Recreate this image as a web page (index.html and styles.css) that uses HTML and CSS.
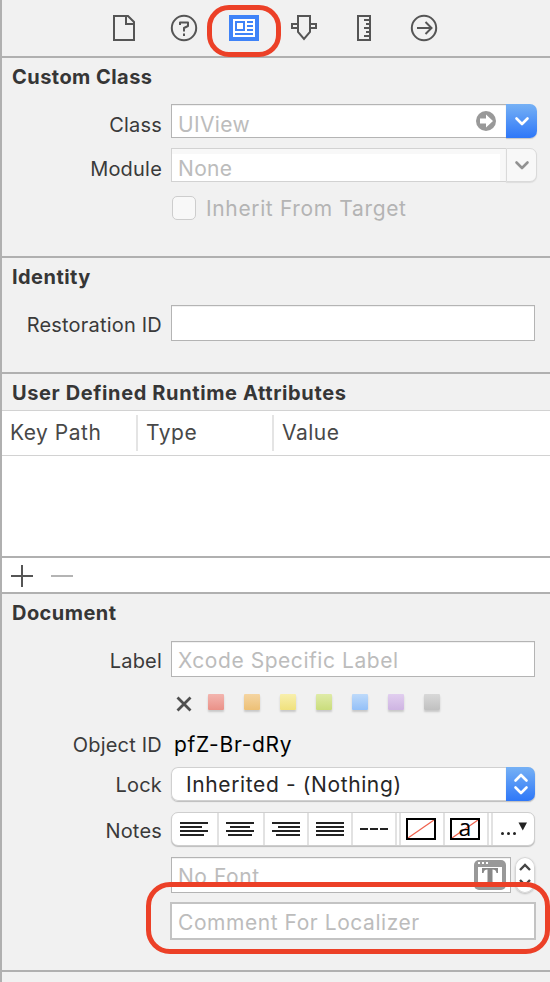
FILE: index.html
```html
<!DOCTYPE html>
<html lang="en">
<head>
<meta charset="utf-8">
<title>Identity Inspector</title>
<link rel="stylesheet" href="styles.css">
</head>
<body>
<main class="inspector">
  <nav class="tabs">
    <svg class="tab" width="30" height="30" viewBox="0 0 30 30"><path d="M5 3h14l6 6v18H5z M17 3v8h8" transform="translate(0 0)"/></svg>
    <svg class="tab" width="30" height="30" viewBox="0 0 30 30"><circle cx="15" cy="15" r="12.200"/><path d="M11 12V9.500h8V13l-4 2v3.500" stroke-linejoin="round"/><path d="M15 20.500v2.500"/></svg>
    <span class="tab-selected">
      <svg class="tab" width="30" height="30" viewBox="0 0 30 30"><path class="blue" d="M0 2h30v26H0z"/><path d="M4 6h22v18H4z" fill="#fff" stroke="none"/><path class="detail" d="M7 9h8v8H7zM18 9h6M18 13h6M18 17h6M6 21h18"/></svg>
      <span class="ring ring-tab"></span>
    </span>
    <svg class="tab" width="30" height="30" viewBox="0 0 30 30"><path d="M9 3h12v16l-6 7-6-7zM9 11H3v4h6M21 11h6v4h-6"/></svg>
    <svg class="tab" width="30" height="30" viewBox="0 0 30 30"><path d="M9 3h12v24H9zM15 7h6M17 11h4M15 15h6M17 19h4M15 23h6"/></svg>
    <svg class="tab" width="30" height="30" viewBox="0 0 30 30"><circle cx="15" cy="15" r="12.200"/><path d="M8 15h14M16.500 9l6 6-6 6"/></svg>
  </nav>

  <section class="section custom-class">
    <h2>Custom Class</h2>
    <div class="row class-row">
      <label>Class</label>
      <div class="combo">
        <div class="field combo-field"><span class="hint short">UIView</span>
          <svg class="go" width="20" height="20" viewBox="0 0 20 20"><circle cx="10" cy="10" r="10" fill="#999"/><path d="M4 7.500h6V3.500l7 6.500-7 6.500v-4H4z" fill="#fff"/></svg>
        </div>
        <div class="arrow arrow-blue"><svg width="16" height="12" viewBox="0 0 16 12"><path d="M2.500 3.500 8 9l5.500-5.500"/></svg></div>
      </div>
    </div>
    <div class="row module-row">
      <label>Module</label>
      <div class="combo">
        <div class="field combo-field disabled"><span class="hint short">None</span></div>
        <div class="arrow arrow-off"><svg width="16" height="12" viewBox="0 0 16 12"><path d="M2.500 3.500 8 9l5.500-5.500"/></svg></div>
      </div>
    </div>
    <div class="inherit"><span class="checkbox"></span><span class="hint">Inherit From Target</span></div>
  </section>

  <section class="section identity">
    <h2>Identity</h2>
    <div class="row restoration-row"><label>Restoration ID</label><div class="field wide"></div></div>
  </section>

  <section class="section attributes">
    <h2 class="loose">User Defined Runtime Attributes</h2>
    <div class="thead"><span>Key Path</span><span>Type</span><span>Value</span></div>
    <div class="tbody"></div>
    <div class="tfoot">
      <svg width="22" height="22" viewBox="0 0 22 22"><path d="M0 11h22M11 0v22" stroke="#555" stroke-width="2"/></svg>
      <svg width="22" height="22" viewBox="0 0 22 22"><path d="M0 11h22" stroke="#b4b4b4" stroke-width="2"/></svg>
    </div>
  </section>

  <section class="section document">
    <h2>Document</h2>
    <div class="row label-row"><label>Label</label><div class="field wide"><span class="hint">Xcode Specific Label</span></div></div>
    <div class="swatches">
      <svg width="16" height="16" viewBox="0 0 16 16"><path d="M1.500 1.500l13 13M14.500 1.500l-13 13" stroke="#505050" stroke-width="2.800"/></svg>
      <i class="red"></i><i class="orange"></i><i class="yellow"></i><i class="green"></i><i class="sky"></i><i class="purple"></i><i class="gray"></i>
    </div>
    <div class="row object-row"><label>Object ID</label><span class="object-id">pfZ-Br-dRy</span></div>
    <div class="row lock-row"><label>Lock</label>
      <div class="popup"><span class="popup-text">Inherited - (Nothing)</span>
        <span class="updown"><svg width="16" height="24" viewBox="0 0 16 24"><path d="M2.500 8.500L8 3l5.500 5.500M2.500 15.500L8 21l5.500-5.500"/></svg></span>
      </div>
    </div>
    <div class="row notes-row"><label>Notes</label>
      <div class="segments">
        <span class="seg s1"><svg width="28" height="16" viewBox="0 0 28 16"><path d="M0 2h28M0 6h22M0 10h28M0 14h24"/></svg></span>
        <span class="seg s2"><svg width="28" height="16" viewBox="0 0 28 16"><path d="M0 2h28M4 6h20M0 10h28M2 14h24"/></svg></span>
        <span class="seg s3"><svg width="28" height="16" viewBox="0 0 28 16"><path d="M0 2h28M6 6h22M0 10h28M4 14h24"/></svg></span>
        <span class="seg s4"><svg width="28" height="16" viewBox="0 0 28 16"><path d="M0 2h28M0 6h28M0 10h28M0 14h28"/></svg></span>
        <span class="seg s5"><svg width="28" height="16" viewBox="0 0 28 16"><path d="M0 8h8M10 8h8M20 8h8"/></svg></span>
        <span class="seg s6"><span class="well"><svg width="26" height="18" viewBox="0 0 26 18"><path class="strike" d="M0 18L26 0"/></svg></span></span>
        <span class="seg s7"><span class="well"><svg width="26" height="18" viewBox="0 0 26 18"><path class="strike" d="M0 18L26 0"/></svg><b>a</b></span></span>
        <span class="seg s8"><svg width="28" height="16" viewBox="0 0 28 16"><g fill="#222"><circle cx="2.500" cy="12.500" r="1.500"/><circle cx="8.500" cy="12.500" r="1.500"/><circle cx="14.500" cy="12.500" r="1.500"/><path d="M18.500 1.500h8.500l-4.250 8z"/></g></svg></span>
      </div>
    </div>
    <div class="font-row">
      <div class="field font-field"><span class="hint">No Font</span>
        <svg class="font-icon" width="32" height="30" viewBox="0 0 32 30"><rect width="32" height="30" rx="5" fill="#999"/><path d="M4 7h24v19H4z" fill="#fff"/><path d="M4 2h2v2H4zM8 2h2v2H8zM12 2h2v2h-2z" fill="#fff"/><path d="M8 8h16v5h-1.500c-.5-2.500-1.500-3.500-4-3.500V21c0 1.500.5 2 2.500 2v1H11v-1c2 0 2.500-.5 2.500-2V9.500c-2.500 0-3.500 1-4 3.500H8z" fill="#888"/></svg>
      </div>
      <div class="stepper"><svg width="20" height="36" viewBox="0 0 20 36"><path d="M5 13l5-5 5 5M5 23l5 5 5-5"/></svg></div>
    </div>
    <div class="comment-row">
      <div class="field comment-field"><span class="hint">Comment For Localizer</span></div>
      <span class="ring ring-comment"></span>
    </div>
  </section>
</main>
</body>
</html>
```
FILE: styles.css
```css
* { box-sizing: border-box; }
body { margin: 0; background: #f1f1f1; font-family: Inter, "Liberation Sans", sans-serif; font-size: 20px; color: #3a3a3a; }
svg { display: block; flex: none; }
.inspector { height: 982px; overflow: hidden; border-left: 2px solid #b0b0b0; }
.tabs { height: 58px; padding: 13px 0 0 107px; display: flex; gap: 30px; border-bottom: 2px solid #b0b0b0; }
.tab { fill: none; stroke: #555; stroke-width: 2; }
.tab .blue { fill: #3f83f8; stroke: none; }
.detail { stroke: #3f83f8; }
.tab-selected { position: relative; height: 30px; }
.ring { position: absolute; z-index: 2; border: 5px solid #ec4027; pointer-events: none; }
.ring-tab { left: -22px; top: -8px; width: 74px; height: 52px; border-radius: 22px; }

.section { border-bottom: 2px solid #b0b0b0; }
.custom-class { height: 200px; }
.identity { height: 116px; }
.attributes { height: 220px; }
.document { height: 378px; }
h2 { margin: 0; height: 36px; padding: 7px 0 0 10px; font-size: 20px; line-height: 24px; font-weight: 700; letter-spacing: .45px; color: #363636; white-space: nowrap; }
.loose { letter-spacing: .62px; }
.row { display: flex; }
label { width: 160px; margin-right: 9px; text-align: right; line-height: 24px; letter-spacing: .2px; white-space: nowrap; }
.field { background: #fff; border: 1px solid #b4b4b4; height: 36px; display: flex; box-shadow: inset 0 1px #f1f1f1; }
.wide { width: 364px; }
.hint { color: #bcbcbc; font-size: 21px; line-height: 26px; padding: 6px 0 0 6px; letter-spacing: .55px; white-space: nowrap; }
.short { letter-spacing: .35px; }
.class-row { margin-top: 10px; height: 34px; }
.module-row { margin-top: 10px; height: 34px; }
.class-row label, .module-row label { padding-top: 9px; }
.combo { display: flex; }
.combo-field { width: 335px; height: 34px; border-right: 0; justify-content: space-between; }
.combo-field .hint { padding-top: 7px; }
.go { margin: 6px 10px 0 0; }
.disabled { border-color: #d2d2d2; box-shadow: inset -6px 5px #f8f8f8; }
.arrow { width: 31px; height: 34px; border-radius: 0 7px 7px 0; display: flex; align-items: center; justify-content: center; }
.arrow path, .updown path { fill: none; stroke: #fff; stroke-width: 2.600; stroke-linecap: round; stroke-linejoin: round; }
.arrow-blue, .updown { background: linear-gradient(#76b1f5, #2e77f8); box-shadow: 0 1px 1px #c4c4c4; }
.arrow-off { background: #f8f8f8; border: 1px solid #dadada; box-shadow: 0 1px 1px #ddd; }
.arrow-off path { stroke: #929292; }
.inherit { display: flex; margin: 14px 0 0 170px; }
.checkbox { width: 24px; height: 24px; border: 1px solid #cdcdcd; border-radius: 5px; background: #f8f8f8; }
.inherit .hint { padding: 1px 0 0 10px; line-height: 24px; color: #b4b4b4; letter-spacing: .64px; }
.restoration-row { margin-top: 11px; }
.restoration-row label { padding-top: 8px; }

.thead { height: 46px; background: #fff; border-top: 1px solid #d2d2d2; border-bottom: 1px solid #d2d2d2; display: flex; padding: 4px 0; }
.thead span { width: 136px; height: 36px; border-right: 2px solid #e4e4e4; padding: 5px 0 0 8px; font-size: 21px; line-height: 26px; letter-spacing: .5px; color: #484848; }
.thead span:last-child { border: 0; }
.tbody { height: 102px; background: #fff; border-bottom: 2px solid #b0b0b0; }
.tfoot { height: 34px; background: #fff; display: flex; gap: 18px; padding: 7px 0 0 9px; }

.label-row { margin-top: 11px; }
.label-row label { padding-top: 8px; }
.swatches { display: flex; height: 16px; margin: 17px 0 0 174px; }
.swatches svg { margin: 2px 16px 0 0; }
.swatches i { width: 16px; height: 16px; margin-right: 20px; border-radius: 1px; box-shadow: 0 2px 2px #c8c8c8; }
.red { background: linear-gradient(#f3b5af, #ea9188); }
.orange { background: linear-gradient(#f5d5a2, #edc076); }
.yellow { background: linear-gradient(#f8efad, #f0e17d); }
.green { background: linear-gradient(#dfeba8, #cadd7c); }
.sky { background: linear-gradient(#bedafa, #93c0f8); }
.purple { background: linear-gradient(#e1ceef, #ceb4e2); }
.gray { background: linear-gradient(#d8d8d8, #c0c0c0); }
.object-row { margin-top: 22px; height: 26px; }
.object-row label { padding-top: 1px; }
.object-id { color: #000; font-size: 21px; line-height: 26px; letter-spacing: .7px; padding-left: 3px; white-space: nowrap; }
.lock-row { margin-top: 9px; }
.lock-row label { padding-top: 6px; }
.popup { width: 364px; height: 34px; background: #fff; border-radius: 7px; display: flex; justify-content: space-between; box-shadow: inset 0 0 0 1px #d0d0d0, 0 1px 1px #bcbcbc; }
.popup-text { color: #262626; font-size: 21px; line-height: 26px; letter-spacing: .62px; padding: 5px 0 0 15px; white-space: nowrap; }
.updown { width: 29px; border-radius: 0 7px 7px 0; display: flex; align-items: center; justify-content: center; }
.notes-row { margin-top: 11px; }
.notes-row label { padding-top: 7px; }
.segments { width: 364px; height: 34px; background: #fff; border: 1px solid #cecece; border-radius: 7px; box-shadow: 0 1px 1px #bcbcbc; display: flex; }
.seg { display: flex; align-items: center; justify-content: center; border-right: 2px solid #e2e2e2; }
.seg > svg path { stroke: #222; stroke-width: 2; }
.s1 { width: 47px; padding-right: 1px; }
.s2 { width: 46px; padding-right: 2px; }
.s3 { width: 44px; }
.s4 { width: 44px; }
.s5 { width: 44px; padding-right: 1px; }
.s6 { width: 46px; border-left: 2px solid #e2e2e2; margin-left: 2px; padding-right: 2px; }
.s7 { width: 44px; padding-right: 2px; }
.s8 { flex: 1; border-left: 2px solid #e2e2e2; border-right: 0; margin-left: 2px; }
.s8 > svg path { stroke: none; }
.well { position: relative; width: 30px; height: 22px; border: 2px solid #000; }
.well .strike { stroke: #ef604c; stroke-width: 1.200; }
.well b { position: absolute; inset: -2px 0 0; text-align: center; font: 23px/18px "Open Sans", sans-serif; color: #000; }
.font-row { display: flex; margin: 11px 0 0 169px; gap: 4px; }
.font-field { width: 340px; justify-content: space-between; }
.font-icon { margin: 2px 4px 0 0; }
.stepper { width: 20px; height: 36px; background: #fff; border-radius: 10px; box-shadow: inset 0 0 0 1px #d5d5d5, 0 1px 2px #bbb; }
.stepper path { fill: none; stroke: #444; stroke-width: 2.400; }
.comment-row { position: relative; margin: 9px 0 0 168px; width: 366px; }
.comment-field { height: 38px; border: 2px solid #c3c3c3; box-shadow: none; }
.ring-comment { left: -24px; top: -20px; width: 404px; height: 72px; border-radius: 24px; }
```
